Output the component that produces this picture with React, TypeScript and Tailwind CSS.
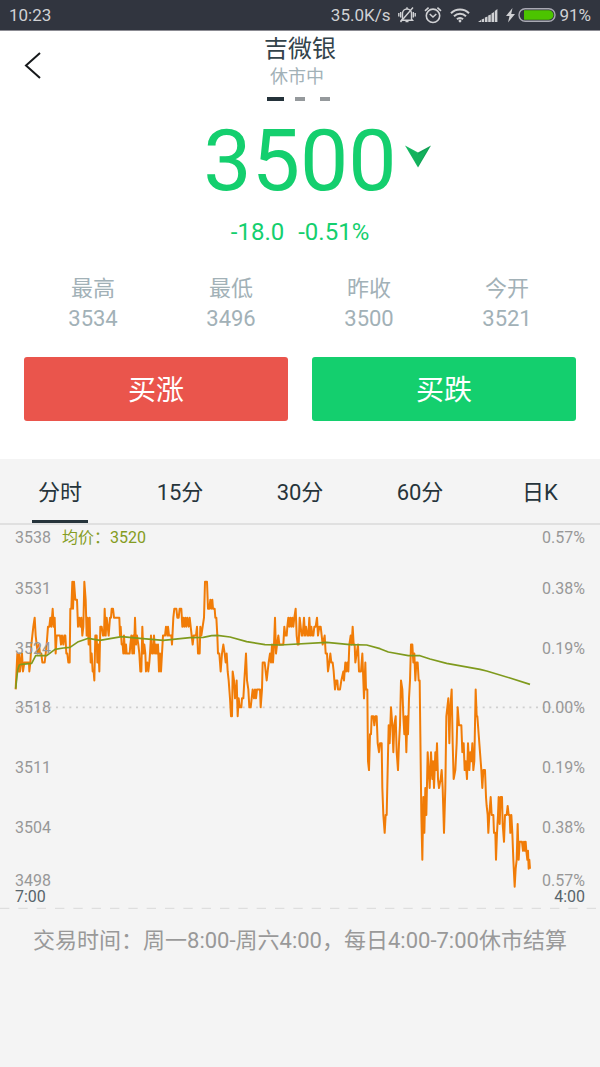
import { useState } from "react";

const STATS = [
  { label: "最高", value: "3534" },
  { label: "最低", value: "3496" },
  { label: "昨收", value: "3500" },
  { label: "今开", value: "3521" },
];

const TABS = ["分时", "15分", "30分", "60分", "日K"];

const AXIS = [
  { price: "3531", change: "0.38%" },
  { price: "3524", change: "0.19%" },
  { price: "3518", change: "0.00%" },
  { price: "3511", change: "0.19%" },
  { price: "3504", change: "0.38%" },
];

// Price ticks per block: "time:offset from the opening price"
const BLOCKS = [
  {
    start: 0,
    ticks:
      "47:2 52:6 56:4 58:6 60:4 66:6 69:4 73:5 87:5 88:4 91:5 94:7 97:8 100:9 104:10 107:8 110:7 113:6 117:7 120:6 124:6 127:5 134:5 137:6 140:7 144:9 148:9 151:10 154:9 158:11 161:9 164:10 167:6 170:8 180:8 183:7 186:8 190:7 193:8 196:8 199:6 202:6 205:5 209:5 211:11 214:11 217:14 219:11 222:14 226:12 231:12 234:9 238:10 241:9 244:10 247:8 250:9 253:14 257:12 260:8 263:10 266:7 269:10 272:5 275:6 278:4 281:4 283:3 286:8 290:8 292:5 295:7 298:4 301:9 305:9 309:8 312:8 314:11 317:8 320:10 323:9 326:8 330:10 333:10 335:11 339:11 342:10 358:10 360:8 362:9 365:7 368:7 370:6 372:8 375:6 378:7 380:6 389:6 391:7 394:8 397:6 400:8 402:6 405:10 408:7 411:8 415:7 418:6",
  },
  {
    start: 420,
    ticks:
      "1:4 4:4 7:9 10:6 13:7 16:6 18:4 22:5 25:4 28:5 30:6 33:8 36:6 39:6 42:8 45:6 48:7 51:6 54:7 57:4 60:6 63:4 66:6 69:8 75:8 78:9 82:8 84:9 87:8 94:8 96:7 100:10 103:11 106:11 109:11 112:10 116:10 119:11 124:11 127:9 130:10 133:9 136:10 139:9 142:10 146:9 149:10 152:9 155:8 158:7 161:8 168:8 171:9 174:6 179:6 181:9 184:8 188:9 192:10 195:14 201:14 204:11 208:11 211:12 214:11 217:12 219:11 224:11 226:10 229:10 232:8 234:6 238:6 240:5 242:4 246:6 250:7 254:6 257:5 260:6 263:4 266:3 270:1 273:-1 276:-1 278:4 282:3 285:1 288:2 290:3 293:-1 296:1 299:0 304:0 306:1 310:1 313:3 318:6 321:3 325:2 328:0 332:0 335:1 338:2 342:1 345:2 348:1 351:2 360:2 362:0 366:2 368:5 374:5 377:4 380:3 383:4 386:5 390:6 393:5 396:7 399:5 402:7 405:10 408:6 411:7 415:8 418:7 428:7",
  },
  {
    start: 840,
    ticks:
      "10:7 13:9 16:8 20:8 22:9 25:10 28:9 31:10 34:9 37:10 40:9 43:10 47:11 50:8 53:7 56:7 59:10 62:9 65:8 68:8 72:10 75:8 78:9 82:8 85:8 88:10 91:8 94:9 97:8 100:8 103:9 107:9 111:10 114:8 118:9 122:9 125:8 128:7 134:8 137:6 141:6 144:4 148:5 151:6 154:5 158:5 161:4 165:2 168:3 172:3 174:2 180:2 184:3 190:4 192:3 196:5 199:4 202:5 205:4 208:7 212:8 215:7 218:9 221:7 224:7 226:5 230:6 234:7 237:4 243:4 247:6 249:4 252:1 256:5 258:2",
  },
  {
    start: 1050,
    ticks:
      "52:2 54:-6 57:-7 60:-3 63:-3 65:-1 70:-1 73:-2 76:-1 80:-1 83:-4 87:-5 90:-4 95:-4 97:-9 100:-12 104:-14 107:-12 110:-12 113:-7 116:-2 119:-4 123:0 127:-2 130:-5 133:-2 137:-1 140:-5 144:-7 147:-4 150:-2 153:3 157:2 160:-1 163:-3 166:-1 169:-5 172:-1 174:-3 177:1 180:3 183:7 187:7 190:5 193:6 196:3 199:5 203:5 206:3 209:3 211:-3 214:-12 217:-17 220:-10 223:-14 226:-9 229:-12 233:-5 236:-7 239:-9 243:-5 247:-8 249:-6 252:-9 256:-5 258:-7 261:-4 264:-8 267:-9 272:-8 275:-7 278:-9 282:-14 286:-9 289:-1 292:0 295:1 298:-4 301:0 305:2 308:-4 311:-8 316:-7 320:-4 323:0 327:-2 334:-2 337:-5 341:-4 344:-7 347:-6 351:-8 354:-4 358:-7 361:-5 364:-6 367:-4 370:-7 373:-6",
  },
  {
    start: 1320,
    ticks:
      "107:2 110:-1 112:-1 116:-3 120:-5 124:-7 127:-9 130:-7 135:-7 138:-10 140:-11 143:-12 145:-14 148:-12 152:-10 155:-12 160:-12 162:-14 166:-14 168:-17 171:-14 174:-12 176:-10 179:-13 182:-10 186:-10 188:-13 192:-15 195:-12 200:-12 203:-11 206:-12 209:-12 211:-14 214:-12 217:-14 220:-17 224:-20 227:-18 230:-17 233:-13 236:-17 239:-15 246:-15 249:-16 252:-15 254:-16 257:-15 259:-16 262:-17 264:-16 266:-18 268:-17 270:-18",
  },
];

const AVERAGE =
  "47,491 53,435 58,420 64,418 95,415 107,392 140,392 165,373 190,369 210,367 235,350 265,340 300,346 330,341 365,335 420,340 490,346 570,338 610,337 635,332 652,331 690,336 740,350 795,359 840,360 980,352 1050,359 1100,360 1140,371 1165,381 1225,392 1260,392 1290,402 1340,415 1440,433 1460,438 1530,459 1590,478";

const ZERO_Y = 547;
const STEP_Y = 26.9;

const pricePoints = BLOCKS.flatMap(({ start, ticks }) =>
  ticks.split(" ").map((tick) => {
    const [time, offset] = tick.split(":").map(Number);
    return `${start + time},${(ZERO_Y - offset * STEP_Y).toFixed(1)}`;
  }),
).join(" ");

function StatusBar() {
  return (
    <div className="flex h-[31px] items-center border-b border-[#8b8b92] bg-[#31353f] px-[9px] text-[17px] leading-none text-[#d0d1d4]">
      <span>10:23</span>
      <div className="ml-auto flex items-center gap-2">
        <span>35.0K/s</span>
        <svg className="size-[18px]" viewBox="0 0 18 18" fill="none" stroke="currentColor" strokeWidth="1.4">
          <path d="M4.5 13V7.5A4.5 4.5 0 0 1 9 3a4.5 4.5 0 0 1 4.5 4.5V13l1 1.2h-11z" />
          <path d="M7.5 15.6h3M9 1.2V3M15 1.5 2.5 16" />
          <path d="M2.7 6v5.5M.8 7v3.5M15.3 6v5.5M17.2 7v3.5" />
        </svg>
        <svg className="size-[18px]" viewBox="0 0 18 18" fill="none" stroke="currentColor" strokeWidth="1.6">
          <circle cx="9" cy="9.8" r="6.7" />
          <path d="M5.7 8 9 11l3.3-3M1 4.8 4.6 1.6M17 4.8l-3.6-3.2" />
        </svg>
        <svg className="h-[18px] w-5" viewBox="0 0 20 18" fill="none" stroke="currentColor" strokeWidth="2">
          <path d="M1 7.2a12.6 12.6 0 0 1 18 0M4 10.2a8.4 8.4 0 0 1 12 0M7 13.2a4.2 4.2 0 0 1 6 0" />
          <circle cx="10" cy="15" r="1.4" fill="currentColor" stroke="none" />
        </svg>
        <svg className="h-[18px] w-5" viewBox="0 0 20 18" fill="currentColor">
          <path d="M0 16l3-2v2zM3.6 13.5l2.5-1V16H3.600zM6.900 11.500l2.600-1V16H6.900zM10.200 9.500l2.600-1V16h-2.600zM13.500 7.500 16.100 6v10h-2.600zM16.800 5l2.600-2v13h-2.600z" />
        </svg>
        <div className="flex items-center gap-[3px]">
          <svg className="h-[18px] w-[9px]" viewBox="0 0 9 18" fill="currentColor">
            <path d="M6.5 2 0 10h3.5L2 16.5 9 8H5.2z" />
          </svg>
          <svg className="h-[18px] w-[38px]" viewBox="0 0 38 18">
            <rect x="1" y="2.8" width="36" height="12.4" rx="6.2" fill="none" stroke="#a9a9b3" strokeWidth="1.4" />
            <path d="M6 4.3h24.8a4.7 4.7 0 0 1 0 9.4H6z" fill="#4cc400" />
          </svg>
          <span>91%</span>
        </div>
      </div>
    </div>
  );
}

function Header() {
  return (
    <header className="grid grid-cols-[1fr_auto_1fr] items-start">
      <button type="button" aria-label="返回" className="ml-4 mt-4 flex size-9 items-center justify-center">
        <svg className="h-7 w-5" viewBox="0 0 20 28" fill="none" stroke="#16191b" strokeWidth="2">
          <path d="M16 2 2 14.5 16 27" />
        </svg>
      </button>
      <div className="flex flex-col items-center">
        <h1 className="text-2xl leading-9 text-[#33434b]">吉微银</h1>
        <p className="pr-1.5 text-lg leading-5 text-[#a2b1b7]">休市中</p>
        <div className="mt-2.5 flex">
          <span className="flex w-[25px] justify-center">
            <i className="h-1 w-[17px] bg-[#24323a]" />
          </span>
          <span className="flex w-[25px] justify-center">
            <i className="h-1 w-2.5 bg-[#95999c]" />
          </span>
          <span className="flex w-[25px] justify-center">
            <i className="h-1 w-2.5 bg-[#95999c]" />
          </span>
        </div>
      </div>
    </header>
  );
}

function Quote() {
  return (
    <section className="text-[#14cf6e]">
      <div className="mt-3 grid grid-cols-[1fr_auto_1fr]">
        <p className="col-start-2 text-[86px] leading-[96px]">3500</p>
        <svg className="ml-2 mt-[31px] h-6 w-[26px]" viewBox="0 0 26 24">
          <path d="M0 1.5 13 8.500V23.500z" fill="#16b862" />
          <path d="M26 1.500 13 8.500V23.500z" fill="#12a055" />
          <path d="M3 4.500 13 10.500 23 4.500 13 22z" fill="#13b15c" />
        </svg>
      </div>
      <p className="mt-[7px] flex justify-center gap-3.5 text-2xl leading-8">
        <span>-18.0</span>
        <span>-0.51%</span>
      </p>
    </section>
  );
}

function Chart() {
  return (
    <div className="relative h-96">
      <svg className="block size-full" viewBox="0 0 1800 1152" preserveAspectRatio="none" fill="none">
        <path d="M48 547H1752" stroke="#cfcfcf" strokeWidth="5" strokeDasharray="6 14" />
        <polyline points={pricePoints} stroke="#f17c07" strokeWidth="6" strokeLinejoin="round" />
        <polyline points={AVERAGE} stroke="#7f9a1d" strokeWidth="5" strokeLinejoin="round" />
        <path d="M0 1150H1800" stroke="#dedede" strokeWidth="4" strokeDasharray="28 27" />
      </svg>
      <div className="absolute inset-0 flex flex-col px-[15px] text-base leading-4 text-[#989898]">
        <div className="flex h-[34px] justify-between pt-[5px]">
          <p className="flex gap-[11px]">
            <span>3538</span>
            <span className="text-[#849c22]">均价：3520</span>
          </p>
          <span>0.57%</span>
        </div>
        {AXIS.map((row) => (
          <div key={row.price} className="flex flex-1 items-center justify-between">
            <span>{row.price}</span>
            <span>{row.change}</span>
          </div>
        ))}
        <div className="flex h-[51px] flex-col justify-end pb-1">
          <div className="flex justify-between">
            <span>3498</span>
            <span>0.57%</span>
          </div>
          <div className="flex justify-between text-[#58646b]">
            <span>7:00</span>
            <span>4:00</span>
          </div>
        </div>
      </div>
    </div>
  );
}

export default function App() {
  const [tab, setTab] = useState("分时");

  return (
    <div lang="zh-CN" className="min-h-screen bg-[#f4f4f4] font-['Roboto','Noto_Sans_CJK_SC',sans-serif]">
      <StatusBar />
      <main>
        <div className="bg-white pb-[38px]">
          <Header />
          <Quote />
          <dl className="mt-[26px] grid grid-cols-4 px-6 text-center text-[22px] leading-[30px] text-[#a2b1b7]">
            {STATS.map((stat) => (
              <div key={stat.label}>
                <dt>{stat.label}</dt>
                <dd>{stat.value}</dd>
              </div>
            ))}
          </dl>
          <div className="mt-[23px] grid grid-cols-2 gap-6 px-6 text-[28px] text-white">
            <button type="button" className="h-16 rounded-[3px] bg-[#ea554c] pt-1">
              买涨
            </button>
            <button type="button" className="h-16 rounded-[3px] bg-[#14cf6e] pt-1">
              买跌
            </button>
          </div>
        </div>
        <nav className="grid grid-cols-5 border-b-2 border-[#e0e0e0] text-[22px] text-[#26343b]">
          {TABS.map((name) => (
            <button key={name} type="button" onClick={() => setTab(name)} className="flex h-16 flex-col items-center">
              <span className="flex flex-1 items-center pt-1.5">{name}</span>
              <i className={name === tab ? "h-[3px] w-14 bg-[#26343b]" : "h-[3px] w-14"} />
            </button>
          ))}
        </nav>
        <Chart />
        <p className="mt-4 text-center text-[22px] leading-8 text-[#999]">
          交易时间：周一8:00-周六4:00，每日4:00-7:00休市结算
        </p>
      </main>
    </div>
  );
}
